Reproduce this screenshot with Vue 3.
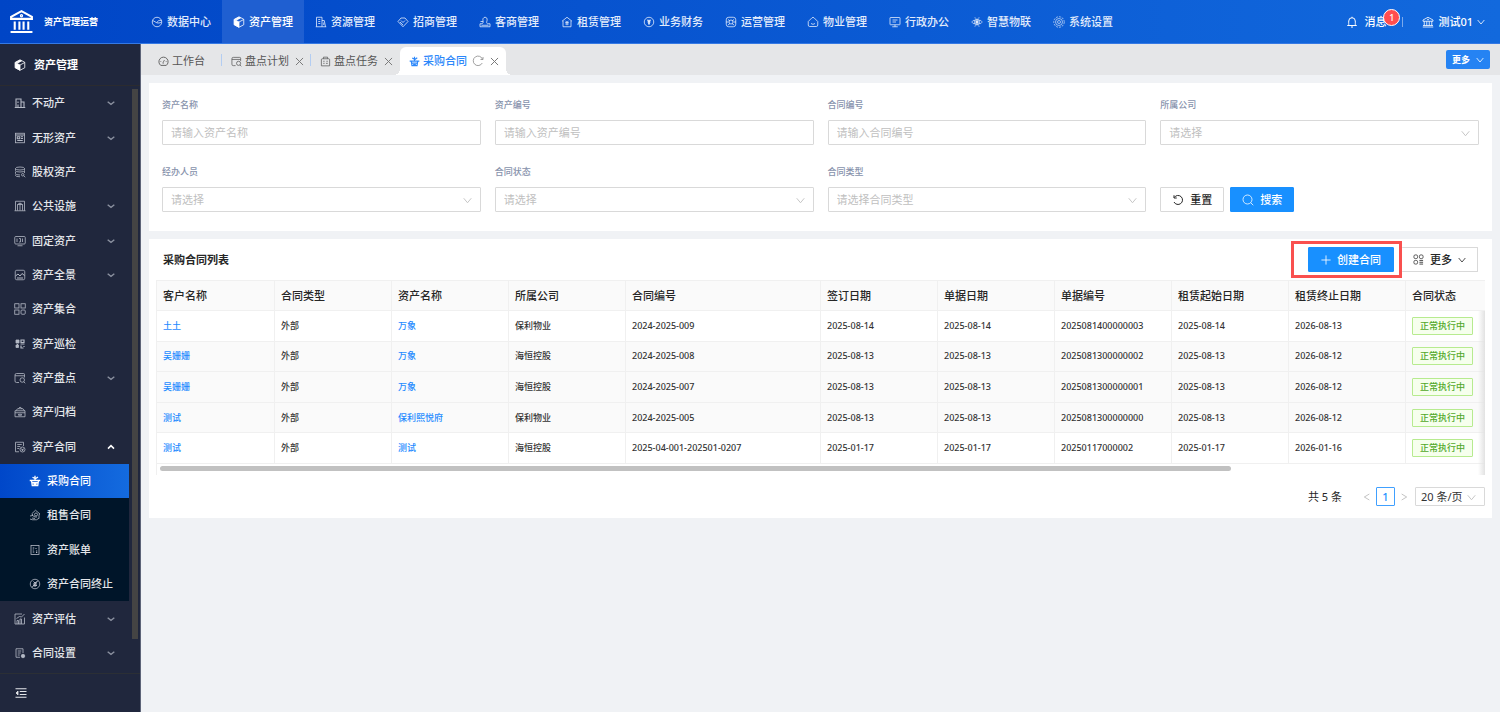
<script setup>
import { h } from 'vue'

const glyphs = {
  pie: '<circle cx="12" cy="12" r="9.5"/><path d="M3.5 9l8 4.5c2-4 4.500-5.500 9.500-4.500M11.500 13.500c3 1 6 .5 9-1"/>',
  cube: '<path d="M12 1.500l9.500 5v11l-9.500 5-9.500-5v-11z"/><path fill="currentColor" d="M2.500 7l9.500 5v10.500l-9.500-5z"/><path fill="currentColor" d="M4 6.500l8-4 3 1.500-8 4z"/><path d="M12 12l9.500-5"/>',
  building: '<path d="M3 21.500V2.500h11v19M14 9h4.500l2.500 12.500M1.500 21.500h21M6.500 7h4M6.500 11h4M6.500 15h4M17.500 13v5"/>',
  tag: '<path d="M2 11l6-7h8l6 7-10 10.500zM8 9l4 4 4-4M6 12l6 6"/>',
  stamp: '<path d="M2 21.500h20v-6h-5c-2-1-2-3-1-6 1-5-1-7-4-7s-5 3-4 7c1 3 0 5-2 6H2zM5 18.500h14M3 11h5"/>',
  home: '<path d="M2 10.500L12 2.500l10 8M4 9.500v12h16v-12"/><path d="M9 9.500l3 3 3-3M8.500 13h7M8.500 16h7M12 12.500v6"/>',
  yen: '<circle cx="12" cy="12" r="9.500"/><path stroke-width="2.400" d="M9 7.500l3 3.500 3-3.500M9 12h6M12 11v6.500M10 14.500h4"/>',
  ops: '<rect x="2.500" y="2.500" width="19" height="19" rx="5"/><path d="M6 7l4 3M18 7l-4 3M6 18l4-3M18 18l-4-3M2 12h5M17 12h5"/><circle cx="12" cy="12" r="4"/>',
  house: '<path d="M2.500 11l7.500-7.500q2-1.500 4 0l7.500 7.500v7q0 3-3 3h-13q-3 0-3-3zM8 15q4 3.500 8 0"/>',
  monitor: '<rect x="2" y="3" width="20" height="14.500" rx="1"/><path d="M12 17.500v4M6.500 21.500h11M7 8h10M7 12h7"/>',
  atom: '<circle cx="12" cy="12" r="2.500" fill="currentColor"/><g stroke-width="1.300"><circle cx="12" cy="12" r="5.500"/><ellipse cx="12" cy="12" rx="10.500" ry="4"/><path d="M7 3.500c2 0 3.500 2 5 3.500 1.500-1.500 3-3.500 5-3.500M7 20.500c2 0 3.500-2 5-3.500 1.500 1.500 3 3.500 5 3.500"/></g>',
  gear: '<g stroke-width="1.300"><circle cx="12" cy="12" r="10.500" stroke-dasharray="4 2"/><circle cx="12" cy="12" r="7"/><circle cx="12" cy="12" r="3"/></g>',
  bell: '<path stroke-width="2" d="M2.500 19h19M5 19c1-2 0-6 .5-9a6.500 6.500 0 0 1 13 0c.5 3-.5 7 .5 9M12 1.500v2M10 22h4"/>',
  bank: '<path d="M2 10.500V8l10-5.500L22 8v2.500zM4.500 10.500V19M9.500 10.500V19M14.500 10.500V19M19.500 10.500V19M2 19h20M1.500 22h21"/><circle cx="12" cy="7" r="1"/>',
  logo: '<path d="M2 9.500V7.500l10-5.500 10 5.500v2zM5.500 12v8M10 12v8M14 12v8M18.500 12v8M1.500 22h21"/><circle cx="12" cy="6.500" r=".6"/>',
  down: '<path stroke-width="2.400" d="M2 6l10 12 10-12"/>',
  fold: '<path stroke-width="4" d="M2 8l10 8 10-8"/>',
  unfold: '<path stroke-width="4.600" d="M3 17l9-9 9 9"/>',
  estate: '<path stroke-width="2.200" d="M4 21V4h10v17M14 10h6v11M1.500 21h21M8 9v3M8 15v6"/>',
  news: '<rect x="3" y="2.500" width="18" height="19"/><path stroke-width="2.200" d="M3 6h18M6.500 9.500h5v4h-5zM14 9.500h4M14 13h4M6.500 17h11"/>',
  stack: '<ellipse cx="12" cy="5" rx="9" ry="3"/><path d="M3 5v4q0 3 9 3t9-3V5M3 11v4q0 3 9 3M3 17v2q0 2.500 9 2.500M21 10v4"/><circle cx="17.500" cy="17.500" r="2.500"/><path d="M19.500 19.500l3 3"/>',
  facility: '<path d="M3 21.500V2.500h18v19M1 21.500h22M7 21V9h10v12M12 6v15M7 9l5-3 5 3"/>',
  asset: '<rect x="1.500" y="3" width="21" height="15" rx="2"/><path d="M6 7v7M10 7h3v7h-3M17 7v7M7 21.500h10"/>',
  scene: '<rect x="2.500" y="2.500" width="19" height="19" rx="3"/><path stroke-width="2" d="M3 14l5-4 4 4 4-5 5 4M6 18h12"/>',
  grid: '<rect x="1.500" y="1.500" width="8.500" height="8.500"/><rect x="14" y="1.500" width="8.500" height="8.500"/><rect x="1.500" y="14" width="8.500" height="8.500"/><rect x="14" y="14" width="8.500" height="8.500" rx="2"/>',
  patrol: '<path fill="currentColor" d="M4 4h6v6H4zM4 14h5v5H4z"/><path stroke-width="2.400" d="M14 4h6v5h-6zM13 12h8M14 15v5h5M20 16v2M7 12v2"/>',
  count: '<path d="M10 21H5q-3 0-3-3V6q0-3 3-3h14q2 0 2 2v6M2 7.500h19"/><circle cx="16.500" cy="16" r="4.500"/><path d="M19.500 19.500l3 3"/>',
  archive: '<path d="M2 9.500h20v12H2zM4 9.500l3-4h11l3 4M9 5.500l3-3.500 4 3.500M2 13.500h20M9 16.500h6v2H9z"/>',
  contract: '<path d="M10 21.500H3v-19h16V10M6.500 7h9M6.500 11h6M6.500 15h4"/><circle cx="17" cy="17" r="5"/><path d="M15 15l2 2 2-2M17 17v3M14.500 17.500h5"/>',
  cart: '<path stroke-width="2.600" d="M1.500 11h21M4.500 15.500h15M5 11l1.500 10h11L19 11M12 11V1.500M12 7L7 4.500M12 8l6-4M9 18.500h6"/>',
  rent: '<path d="M5 10l8-7.500 9 7.500-2 1v8M7 10v4M2 14l5-1 5 3h4M2 20l5 1.500h8l5-3M6 18l6 1"/><circle cx="14" cy="11" r="3"/>',
  bill: '<rect x="4" y="3" width="16" height="18"/><path stroke-width="2" d="M7.500 8h3M7.500 12h2M7.500 16h3M14 8v2M14 14h2.500M14 17h2.500"/>',
  stop: '<circle cx="12" cy="12" r="9.500"/><path stroke-width="2" d="M18 5L6 19M9 7l3 3 3-3M8 12h8M8 15h8M12 10v8"/>',
  assess: '<path d="M16 2H2v20h19V9"/><path d="M6 22v-7h3v7M12 22V12h3v10M5 11l6-4 4 1 6-6"/>',
  settings: '<path d="M12 20.500H4v-17h14V12M7.500 8h7M7.500 12h6M7.500 16h4"/><circle cx="18" cy="18" r="3.500" fill="currentColor"/>',
  indent: '<path stroke-width="2.400" d="M1 3.500h22M9.500 9h13.500M9.500 15h13.500M1 20.500h22"/><path fill="currentColor" d="M6 8v8l-4-4z"/>',
  gauge: '<path stroke-width="1.900" d="M6 20.500a10 10 0 1 1 12 0zM12 17c-2-1-1-3 2-8M5.500 12h1.500M17 12h1.500"/>',
  task: '<path d="M5 6h14q2 0 2 2v13.500H3V8q0-2 2-2zM7.500 6V2.500h9V6M7 11.500h3M14 11.500h3M7 16h3M13 16h4"/>',
  reload: '<path d="M20.500 16a9.500 9.500 0 1 1 .5-7.500M22 4v5h-5"/>',
  undo: '<path stroke-width="2" d="M4.500 7a9 9 0 1 1-.5 9M4 2.500V8h5.500"/>',
  close: '<path stroke-width="2.600" d="M2.500 2.500l19 19M21.500 2.500l-19 19"/>',
  search: '<circle cx="11" cy="11" r="9"/><path d="M17.500 17.500l5 5"/>',
  plus: '<path stroke-width="2" d="M12 1v22M1 12h22"/>',
  apps: '<rect x="2" y="2" width="8" height="8" rx="3"/><rect x="14" y="2" width="8" height="8" rx="3"/><rect x="2" y="14" width="8" height="8" rx="3"/><path stroke-width="1.800" d="M14 14h8M14 18h8M14 22h8"/>',
  left: '<path stroke-width="2.400" d="M19 3L4 12l15 9"/>',
  right: '<path stroke-width="2.400" d="M5 3l15 9-15 9"/>'
}

const Icon = (props) =>
  h('svg', {
    viewBox: '0 0 24 24',
    fill: 'none',
    stroke: 'currentColor',
    'stroke-width': 1.6,
    'aria-hidden': 'true',
    innerHTML: glyphs[props.name]
  })
Icon.props = ['name']

const modules = [
  ['pie', '数据中心'], ['cube', '资产管理'], ['building', '资源管理'], ['tag', '招商管理'],
  ['stamp', '客商管理'], ['home', '租赁管理'], ['yen', '业务财务'], ['ops', '运营管理'],
  ['house', '物业管理'], ['monitor', '行政办公'], ['atom', '智慧物联'], ['gear', '系统设置']
]

const menu = [
  { icon: 'estate', text: '不动产', fold: true },
  { icon: 'news', text: '无形资产', fold: true },
  { icon: 'stack', text: '股权资产' },
  { icon: 'facility', text: '公共设施', fold: true },
  { icon: 'asset', text: '固定资产', fold: true },
  { icon: 'scene', text: '资产全景', fold: true },
  { icon: 'grid', text: '资产集合' },
  { icon: 'patrol', text: '资产巡检' },
  { icon: 'count', text: '资产盘点', fold: true },
  { icon: 'archive', text: '资产归档' },
  {
    icon: 'contract',
    text: '资产合同',
    children: [['cart', '采购合同'], ['rent', '租售合同'], ['bill', '资产账单'], ['stop', '资产合同终止']]
  },
  { icon: 'assess', text: '资产评估', fold: true },
  { icon: 'settings', text: '合同设置', fold: true }
]

const tabs = [
  { icon: 'gauge', text: '工作台' },
  { icon: 'count', text: '盘点计划', closable: true },
  { icon: 'task', text: '盘点任务', closable: true },
  { icon: 'cart', text: '采购合同', closable: true, active: true }
]

const fields = [
  { id: 'asset-name', label: '资产名称', hint: '请输入资产名称' },
  { id: 'asset-no', label: '资产编号', hint: '请输入资产编号' },
  { id: 'contract-no', label: '合同编号', hint: '请输入合同编号' },
  { id: 'company', label: '所属公司', hint: '请选择', select: true },
  { id: 'handler', label: '经办人员', hint: '请选择', select: true },
  { id: 'status', label: '合同状态', hint: '请选择', select: true },
  { id: 'type', label: '合同类型', hint: '请选择合同类型', select: true }
]

const columns = ['客户名称', '合同类型', '资产名称', '所属公司', '合同编号', '签订日期', '单据日期', '单据编号', '租赁起始日期', '租赁终止日期', '合同状态']
const rows = [
  ['土土', '外部', '万象', '保利物业', '2024-2025-009', '2025-08-14', '2025-08-14', '2025081400000003', '2025-08-14', '2026-08-13'],
  ['吴姗姗', '外部', '万象', '海恒控股', '2024-2025-008', '2025-08-13', '2025-08-13', '2025081300000002', '2025-08-13', '2026-08-12'],
  ['吴姗姗', '外部', '万象', '海恒控股', '2024-2025-007', '2025-08-13', '2025-08-13', '2025081300000001', '2025-08-13', '2026-08-12'],
  ['测试', '外部', '保利熙悦府', '保利物业', '2024-2025-005', '2025-08-13', '2025-08-13', '2025081300000000', '2025-08-13', '2026-08-12'],
  ['测试', '外部', '测试', '海恒控股', '2025-04-001-202501-0207', '2025-01-17', '2025-01-17', '20250117000002', '2025-01-17', '2026-01-16']
]
</script>

<template>
  <div class="app">
    <header class="topbar">
      <div class="brand"><Icon name="logo" class="logo" /><strong>资产管理运营</strong></div>
      <nav class="modules">
        <a v-for="[icon, text] in modules" :key="text" href="#" :class="{ on: icon === 'cube' }">
          <Icon :name="icon" class="ico" />{{ text }}
        </a>
      </nav>
      <div class="account">
        <button type="button" class="message"><Icon name="bell" class="ico" />消息<span class="badge">1</span></button>
        <i class="bar"></i>
        <button type="button" class="user"><Icon name="bank" class="ico" />测试01<Icon name="down" class="chev" /></button>
      </div>
    </header>

    <div class="body">
      <aside class="side">
        <h2><Icon name="cube" class="ico" />资产管理</h2>
        <ul class="menu">
          <li v-for="item in menu" :key="item.text" :class="{ open: item.children }">
            <a href="#" class="entry">
              <Icon :name="item.icon" class="ico" />{{ item.text }}
              <Icon v-if="item.fold" name="fold" class="arrow" />
              <Icon v-if="item.children" name="unfold" class="arrow up" />
            </a>
            <ul v-if="item.children" class="sub">
              <li v-for="[icon, text] in item.children" :key="text">
                <a href="#" class="entry" :class="{ on: icon === 'cart' }"><Icon :name="icon" class="ico" />{{ text }}</a>
              </li>
            </ul>
          </li>
        </ul>
        <i class="track"></i>
        <div class="collapse"><button type="button" aria-label="收起"><Icon name="indent" class="ico" /></button></div>
      </aside>

      <main class="main">
        <div class="tabs">
          <div v-for="tab in tabs" :key="tab.text" class="tab" :class="{ active: tab.active }">
            <a href="#"><Icon :name="tab.icon" class="tabico" />{{ tab.text }}</a>
            <button v-if="tab.active" type="button" aria-label="刷新"><Icon name="reload" class="reload" /></button>
            <button v-if="tab.closable" type="button" aria-label="关闭" class="x"><Icon name="close" class="closeico" /></button>
          </div>
          <button type="button" class="tabmore">更多<Icon name="down" class="chev" /></button>
        </div>

        <form class="card filter" @submit.prevent>
          <div v-for="f in fields" :key="f.id" class="field">
            <label :for="f.id">{{ f.label }}</label>
            <div v-if="f.select" class="pick">
              <select :id="f.id"><option>{{ f.hint }}</option></select>
              <Icon name="down" class="caret" />
            </div>
            <input v-else :id="f.id" type="text" :placeholder="f.hint" />
          </div>
          <div class="actions">
            <button type="reset" class="btn"><Icon name="undo" class="ico" />重置</button>
            <button type="submit" class="btn primary"><Icon name="search" class="ico" />搜索</button>
          </div>
        </form>

        <section class="card list">
          <div class="head">
            <h1>采购合同列表</h1>
            <div class="tools">
              <div class="marked"><button type="button" class="btn primary create"><Icon name="plus" class="plus" />创建合同</button></div>
              <button type="button" class="btn more"><Icon name="apps" class="tabico" />更多<Icon name="down" class="chev" /></button>
            </div>
          </div>
          <div class="scroll">
            <table>
              <colgroup><col v-for="(c, i) in columns" :key="c" :class="{ wide: i === 4 }" /></colgroup>
              <thead><tr><th v-for="c in columns" :key="c" scope="col">{{ c }}</th></tr></thead>
              <tbody>
                <tr v-for="(row, r) in rows" :key="r">
                  <td v-for="(cell, i) in row" :key="i">
                    <a v-if="i === 0 || i === 2" href="#">{{ cell }}</a>
                    <template v-else>{{ cell }}</template>
                  </td>
                  <td><span class="tag">正常执行中</span></td>
                </tr>
              </tbody>
            </table>
            <div class="hbar"><i></i></div>
            <i class="fade"></i>
          </div>
          <div class="pager">
            <span class="total">共 5 条</span>
            <button type="button" aria-label="上一页" class="step"><Icon name="left" class="chev" /></button>
            <button type="button" class="page">1</button>
            <button type="button" aria-label="下一页" class="step"><Icon name="right" class="chev" /></button>
            <div class="pick size">
              <select aria-label="每页条数"><option>20 条/页</option></select>
              <Icon name="down" class="caret" />
            </div>
          </div>
        </section>
      </main>
    </div>
  </div>
</template>

<style>
body { margin: 0; background: #f0f2f5; }
</style>

<style scoped>
.app, button, input, select {
  font-family: "Noto Sans", "Noto Sans CJK SC", sans-serif;
  font-size: 11px;
  line-height: 16px;
}
.app { min-height: 100vh; display: flex; flex-direction: column; color: #262626; font-weight: 500; }
* { box-sizing: border-box; }
a { color: inherit; text-decoration: none; }
button { border: 0; padding: 0; background: none; color: inherit; font-weight: 500; display: flex; align-items: center; }
ul { list-style: none; margin: 0; padding: 0; }
svg { flex: none; display: block; }
.ico { width: 12px; height: 12px; }
.tabico { width: 11px; height: 11px; }
.chev { width: 8px; height: 8px; }

.topbar {
  height: 44px; display: flex; align-items: center; color: #fff;
  background: linear-gradient(90deg, #0045c6, #1269dd);
  border-bottom: 1px solid #3579e4;
}
.brand { width: 140px; padding-left: 9px; display: flex; align-items: center; gap: 10px; }
.brand strong { font-weight: 700; font-size: 9px; }
.logo { width: 25px; height: 25px; stroke-width: 2; }
.modules { display: flex; align-self: stretch; color: #e3ecfb; }
.modules a { display: flex; align-items: center; gap: 4px; padding: 0 11px; white-space: nowrap; }
.modules a.on { background: #1f5fd1; color: #fff; }
.account { margin-left: auto; padding-right: 15px; display: flex; align-items: center; }
.message { position: relative; gap: 6px; }
.badge {
  position: absolute; left: 37px; top: -5px; width: 17px; height: 17px; border-radius: 50%;
  border: 1px solid #fff; background: #ff4d4f; font-size: 9px; line-height: 15px; text-align: center;
}
.bar { width: 1px; height: 10px; margin: 0 19px 0 16px; background: #7ba9ec; }
.user { gap: 4px; }

.body { flex: 1; display: flex; }
.side {
  position: relative; width: 141px; flex: none; display: flex; flex-direction: column;
  background: #20273d; border-right: 1px solid #5d6478; color: #e4e6ea;
}
.side h2 {
  margin: 0; height: 42px; padding-left: 14px; display: flex; align-items: center; gap: 8px;
  font-size: 11px; font-weight: 700; color: #fff; border-bottom: 1px solid #2b2b2f;
}
.menu { flex: 1; display: flex; flex-direction: column; width: 129px; padding-bottom: 3px; }
.menu > li, .sub > li { flex: 1 1 0; min-height: 34px; display: flex; flex-direction: column; }
.menu > li.open { flex-grow: 5; }
.entry { flex: 1 1 0; display: flex; align-items: center; gap: 6px; padding: 0 14px; white-space: nowrap; }
.entry .ico { color: #b4b9c5; }
.arrow { width: 8px; height: 8px; margin-left: auto; color: #8b91a0; }
.arrow.up { color: #fff; }
.sub { flex: 4 1 0; display: flex; flex-direction: column; background: #001529; }
.sub .entry { padding: 0 0 0 29px; }
.entry.on { background: linear-gradient(90deg, #0047c9, #146bdf); color: #fff; }
.entry.on .ico { color: #fff; }
.track { position: absolute; right: 2px; top: 45px; bottom: 73px; width: 6px; background: #444; }
.collapse { height: 39px; padding-left: 15px; display: flex; align-items: center; border-top: 1px solid #2b2f35; }

.main { flex: 1; min-width: 0; background: #f0f2f5; }
.tabs { height: 31px; display: flex; align-items: flex-end; padding: 0 10px 0 8px; background: #e5e6e8; color: #555; font-weight: 400; }
.tab { position: relative; height: 28px; display: flex; align-items: center; padding: 0 7px 0 9px; }
.tab:first-child { padding: 0 17px 0 9px; }
.tab:nth-child(-n + 2)::after { content: ""; position: absolute; right: 0; top: 7px; width: 1px; height: 12px; background: #b3cdf2; }
.tab a { display: flex; align-items: center; gap: 3px; }
.closeico { width: 9px; height: 9px; color: #777; }
.reload { width: 12px; height: 12px; color: #888; }
.x { margin-left: 6px; }
.tab.active { background: #fff; border-radius: 6px 6px 0 0; color: #2b87fa; font-weight: 500; }
.tab.active .reload { margin-left: 5px; }
.tab.active::before, .tab.active::after {
  content: ""; position: absolute; bottom: 0; width: 6px; height: 6px;
  background: radial-gradient(circle at 0 0, transparent 6px, #fff 6px);
}
.tab.active::before { left: -6px; }
.tab.active::after { right: -6px; background: radial-gradient(circle at 100% 0, transparent 6px, #fff 6px); }
.tabmore {
  margin: 0 0 6px auto; height: 19px; padding: 0 6px; gap: 6px; border-radius: 2px;
  background: #2583f3; color: #fff; font-size: 9px; font-weight: 700;
}

.card { margin: 8px; background: #fff; }
.filter { padding: 15px 13px 19px; display: grid; grid-template-columns: repeat(4, 1fr); gap: 20px 14px; }
.field { display: flex; flex-direction: column; gap: 8px; }
.field label { font-size: 9px; line-height: 14px; color: #8792ac; }
input, select {
  width: 100%; height: 25px; margin: 0; padding: 0 8px; border: 1px solid #d9d9d9; border-radius: 1px;
  background: #fff; color: #bfbfbf; appearance: none; display: block; outline: none;
}
input::placeholder { color: #bfbfbf; }
.pick { position: relative; }
.caret { position: absolute; right: 9px; top: 50%; width: 9px; height: 9px; margin-top: -4px; color: #bfbfbf; pointer-events: none; }
.actions { display: flex; align-items: flex-end; gap: 6px; }
.btn { height: 25px; padding: 0 12px; gap: 6px; border: 1px solid #d9d9d9; border-radius: 1px; background: #fff; white-space: nowrap; }
.actions .btn { padding: 0 11px; }
.btn.primary { border-color: #1890ff; background: #1890ff; color: #fff; }
.plus { width: 10px; height: 10px; }

.list { padding: 0 7px 12px; }
.head { display: flex; align-items: center; justify-content: space-between; height: 41px; padding: 0 7px; }
h1 { margin: 0; font-size: 11px; font-weight: 700; }
.tools { display: flex; align-items: center; }
.marked { z-index: 1; padding: 3px 5px 3px 14px; border: 3px solid #f9504f; }
.btn.more { padding: 0 11px; gap: 6px; border-left: 0; }

.scroll { position: relative; overflow: hidden; border-left: 1px solid #f0f0f0; }
table { table-layout: fixed; width: 1640px; height: 184px; border-collapse: separate; border-spacing: 0; }
col { width: 117px; }
col:first-child { width: 118px; }
col.wide { width: 195px; }
col:last-child { width: auto; }
th, td { padding: 0 6px; text-align: left; border: solid #f0f0f0; border-width: 0 1px 1px 0; white-space: nowrap; }
th { height: 31px; background: #fafafa; font-weight: 500; border-top-width: 1px; }
td { font-size: 9px; line-height: 16px; color: #333; }
td a { color: #1f8bff; }
tbody tr:nth-child(n + 2):nth-child(-n + 4) { background: #fafafa; }
.tag { display: inline-block; padding: 0 7px; border: 1px solid #b7eb8f; border-radius: 1px; background: #f6ffed; color: #52a82a; }
.hbar { height: 11px; padding: 2px 3px; }
.hbar i { display: block; width: 81%; height: 5px; border-radius: 3px; background: #c1c1c1; }
.fade { position: absolute; right: 0; top: 31px; bottom: 0; width: 7px; background: linear-gradient(90deg, transparent, #e2e2e2); }

.pager { margin-top: 12px; display: flex; align-items: center; justify-content: flex-end; font-weight: 400; }
.total { margin-right: 21px; }
.step { color: #b5b5b5; }
.page { margin: 0 5px; width: 19px; height: 19px; justify-content: center; border: 1px solid #40a0ff; border-radius: 1px; color: #1890ff; }
.size { margin-left: 7px; width: 70px; }
.size select { height: 19px; padding: 0 5px; color: #333; }
</style>
